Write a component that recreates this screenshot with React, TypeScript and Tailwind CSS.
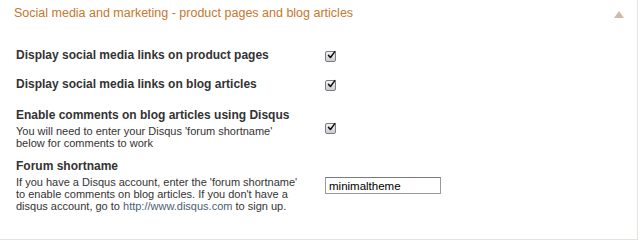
function Check() {
  return (
    <span className="flex h-[11px] w-[11px] items-center justify-center rounded-[2px] border border-[#7d7d7d] bg-gradient-to-b from-[#f4f4f4] to-[#c9ccd3]">
      <svg viewBox="0 0 12 12" className="h-[12px] w-[12px] -translate-y-[2px] translate-x-[1px]">
        <path d="M2 6.5 L4.6 9.4 L10.5 1.5" fill="none" stroke="#111" strokeWidth="2" strokeLinecap="round" strokeLinejoin="round" />
      </svg>
    </span>
  );
}

type Row = {
  title: string;
  desc?: React.ReactNode;
  gap: string;
};

const rows: Row[] = [
  { title: 'Display social media links on product pages', gap: 'mt-0' },
  { title: 'Display social media links on blog articles', gap: 'mt-[13px]' },
  {
    title: 'Enable comments on blog articles using Disqus',
    gap: 'mt-[15px]',
    desc: (
      <>
        You will need to enter your Disqus 'forum shortname'
        <br />
        below for comments to work
      </>
    ),
  },
];

export default function App() {
  return (
    <div className="h-[244px] w-[640px] whitespace-nowrap bg-white font-['Liberation_Sans',sans-serif] text-[#333]">
      <div className="h-[240px] w-[638px] border-r border-b border-[#e6e3de]">
        <div className="flex items-center justify-between pt-[5px] pl-[14px] pr-[13px]">
          <h2 className="text-[12.5px] leading-[16px] text-[#c5772e]">
            Social media and marketing - product pages and blog articles
          </h2>
          <span className="mt-[2px] h-0 w-0 border-x-[5px] border-b-[7px] border-x-transparent border-b-[#cdbba6]" />
        </div>

        <div className="flex flex-col pt-[26px] pl-[16px]">
          {rows.map((row) => (
            <div key={row.title} className={`flex ${row.gap}`}>
              <div className="w-[309px]">
                <div className="text-[12px] font-bold leading-[16px]">{row.title}</div>
                {row.desc ? (
                  <div className="mt-[2px] text-[11px] leading-[12px]">{row.desc}</div>
                ) : null}
              </div>
              <div className={row.desc ? 'pt-[16px]' : 'pt-[4px]'}>
                <Check />
              </div>
            </div>
          ))}

          <div className="mt-[9px] flex">
            <div className="w-[309px]">
              <div className="text-[12px] font-bold leading-[16px]">Forum shortname</div>
              <div className="mt-[2px] text-[11px] leading-[12px]">
                If you have a Disqus account, enter the 'forum shortname'
                <br />
                to enable comments on blog articles. If you don't have a
                <br />
                disqus account, go to <span className="text-[#4a5e74]">http://www.disqus.com</span> to sign up.
              </div>
            </div>
            <div className="pt-[19px]">
              <input
                defaultValue="minimaltheme"
                className="block h-[17px] w-[116px] border border-[#9a9a9a] border-t-[#7a7a7a] px-[3px] text-[11.5px] leading-[15px] text-black outline-none"
              />
            </div>
          </div>
        </div>
      </div>
    </div>
  );
}
